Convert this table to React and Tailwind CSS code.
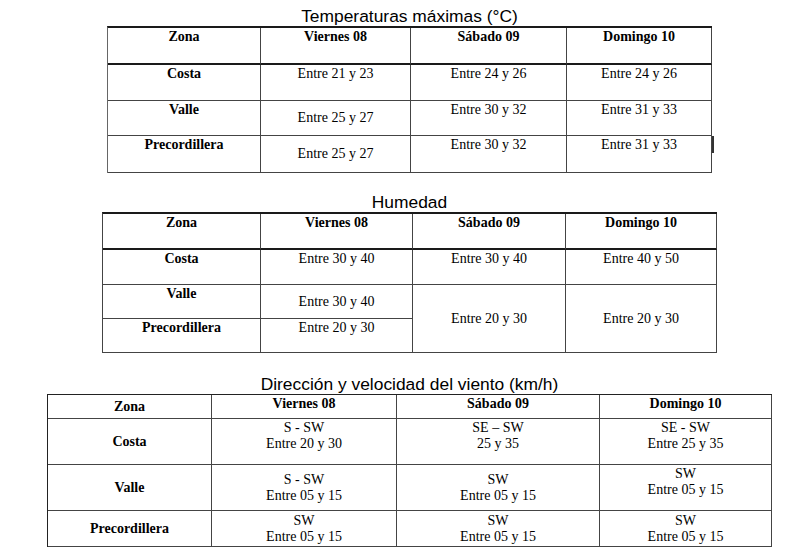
import React from "react";

const days = ["Viernes 08", "Sábado 09", "Domingo 10"];

// one cell of a table: top = text sits at the top, else centred vertically
const Cell = ({ children, top, bold, className = "" }) => (
  <div
    className={`border-r border-b border-[#444] text-center ${
      top ? "pt-px" : "flex flex-col items-center justify-center"
    } ${bold ? "font-bold" : ""} ${className}`}
  >
    {children}
  </div>
);

const Title = ({ children, className = "" }) => (
  <h2
    className={`font-['Liberation_Sans',Arial,sans-serif] text-[17.4px] leading-[19px] text-black ${className}`}
  >
    {children}
  </h2>
);

const Lines = ({ a, b }) => (
  <>
    <span>{a}</span>
    <span>{b}</span>
  </>
);

const App = () => {
  return (
    <div className="w-[800px] h-[555px] bg-white flex flex-col items-center pl-[19px] pt-[7px] text-black">
      {/* Temperaturas */}
      <Title>Temperaturas máximas (°C)</Title>
      <div className="relative grid grid-cols-[153px_150px_156px_145px] grid-rows-[37px_36px_35px_37px] border-l border-l-[#666] border-t-2 border-t-[#1a1a1a] font-['Liberation_Serif',serif] text-[14px] leading-4">
        <Cell top bold className="border-b-2 border-b-[#1a1a1a]">Zona</Cell>
        {days.map((d) => (
          <Cell key={d} top bold className="border-b-2 border-b-[#1a1a1a]">
            {d}
          </Cell>
        ))}
        <Cell top bold className="pt-0">Costa</Cell>
        <Cell top className="pt-0">Entre 21 y 23</Cell>
        <Cell top className="pt-0">Entre 24 y 26</Cell>
        <Cell top className="pt-0">Entre 24 y 26</Cell>

        <Cell top bold className="pt-[3px]">Valle</Cell>
        <Cell>Entre 25 y 27</Cell>
        <Cell top className="pt-[3px]">Entre 30 y 32</Cell>
        <Cell top className="pt-[3px]">Entre 31 y 33</Cell>

        <Cell top bold className="pt-[3px]">Precordillera</Cell>
        <Cell>Entre 25 y 27</Cell>
        <Cell top className="pt-[3px]">Entre 30 y 32</Cell>
        <Cell top className="pt-[3px]">Entre 31 y 33</Cell>

        {/* small stray tick on the right edge */}
        <span className="absolute right-[-2px] top-[108px] h-[17px] w-[2px] bg-[#333]" />
      </div>

      {/* Humedad */}
      <Title className="mt-[20px]">Humedad</Title>
      <div className="grid grid-cols-[158px_152px_153px_151px] grid-rows-[36px_35px_34px_34px] border-l border-l-[#444] border-t-2 border-t-[#1a1a1a] font-['Liberation_Serif',serif] text-[14px] leading-4">
        <Cell top bold className="pt-[2px] border-b-2 border-b-[#1a1a1a]">Zona</Cell>
        {days.map((d) => (
          <Cell key={d} top bold className="pt-[2px] border-b-2 border-b-[#1a1a1a]">
            {d}
          </Cell>
        ))}
        <Cell top bold className="pt-[2px]">Costa</Cell>
        <Cell top className="pt-[2px]">Entre 30 y 40</Cell>
        <Cell top className="pt-[2px]">Entre 30 y 40</Cell>
        <Cell top className="pt-[2px]">Entre 40 y 50</Cell>

        <Cell top bold className="pt-[2px]">Valle</Cell>
        <Cell>Entre 30 y 40</Cell>
        <Cell className="row-span-2">Entre 20 y 30</Cell>
        <Cell className="row-span-2">Entre 20 y 30</Cell>

        <Cell top bold className="pt-[2px]">Precordillera</Cell>
        <Cell top className="pt-[2px]">Entre 20 y 30</Cell>
      </div>

      {/* Viento */}
      <Title className="mt-[22px]">Dirección y velocidad del viento (km/h)</Title>
      <div className="grid grid-cols-[164px_185px_203px_172px] grid-rows-[24px_46px_46px_36px] border-l border-t border-[#222] font-['Liberation_Serif',serif] text-[14px] leading-4">
        <Cell bold className="border-[#222]">Zona</Cell>
        {days.map((d) => (
          <Cell key={d} top bold className="border-[#222] pt-[2px]">
            {d}
          </Cell>
        ))}

        <Cell bold className="border-[#222]">Costa</Cell>
        <Cell top className="border-[#222] pt-[2px] flex flex-col items-center">
          <Lines a="S - SW" b="Entre 20 y 30" />
        </Cell>
        <Cell top className="border-[#222] pt-[2px] flex flex-col items-center">
          <Lines a="SE – SW" b="25 y 35" />
        </Cell>
        <Cell top className="border-[#222] pt-[2px] flex flex-col items-center">
          <Lines a="SE - SW" b="Entre 25 y 35" />
        </Cell>

        <Cell bold className="border-[#222]">Valle</Cell>
        <Cell className="border-[#222]">
          <Lines a="S - SW" b="Entre 05 y 15" />
        </Cell>
        <Cell className="border-[#222]">
          <Lines a="SW" b="Entre 05 y 15" />
        </Cell>
        <Cell top className="border-[#222] pt-[2px] flex flex-col items-center">
          <Lines a="SW" b="Entre 05 y 15" />
        </Cell>

        <Cell bold className="border-[#222]">Precordillera</Cell>
        <Cell className="border-[#222]">
          <Lines a="SW" b="Entre 05 y 15" />
        </Cell>
        <Cell className="border-[#222]">
          <Lines a="SW" b="Entre 05 y 15" />
        </Cell>
        <Cell className="border-[#222]">
          <Lines a="SW" b="Entre 05 y 15" />
        </Cell>
      </div>
    </div>
  );
};

export default App;
